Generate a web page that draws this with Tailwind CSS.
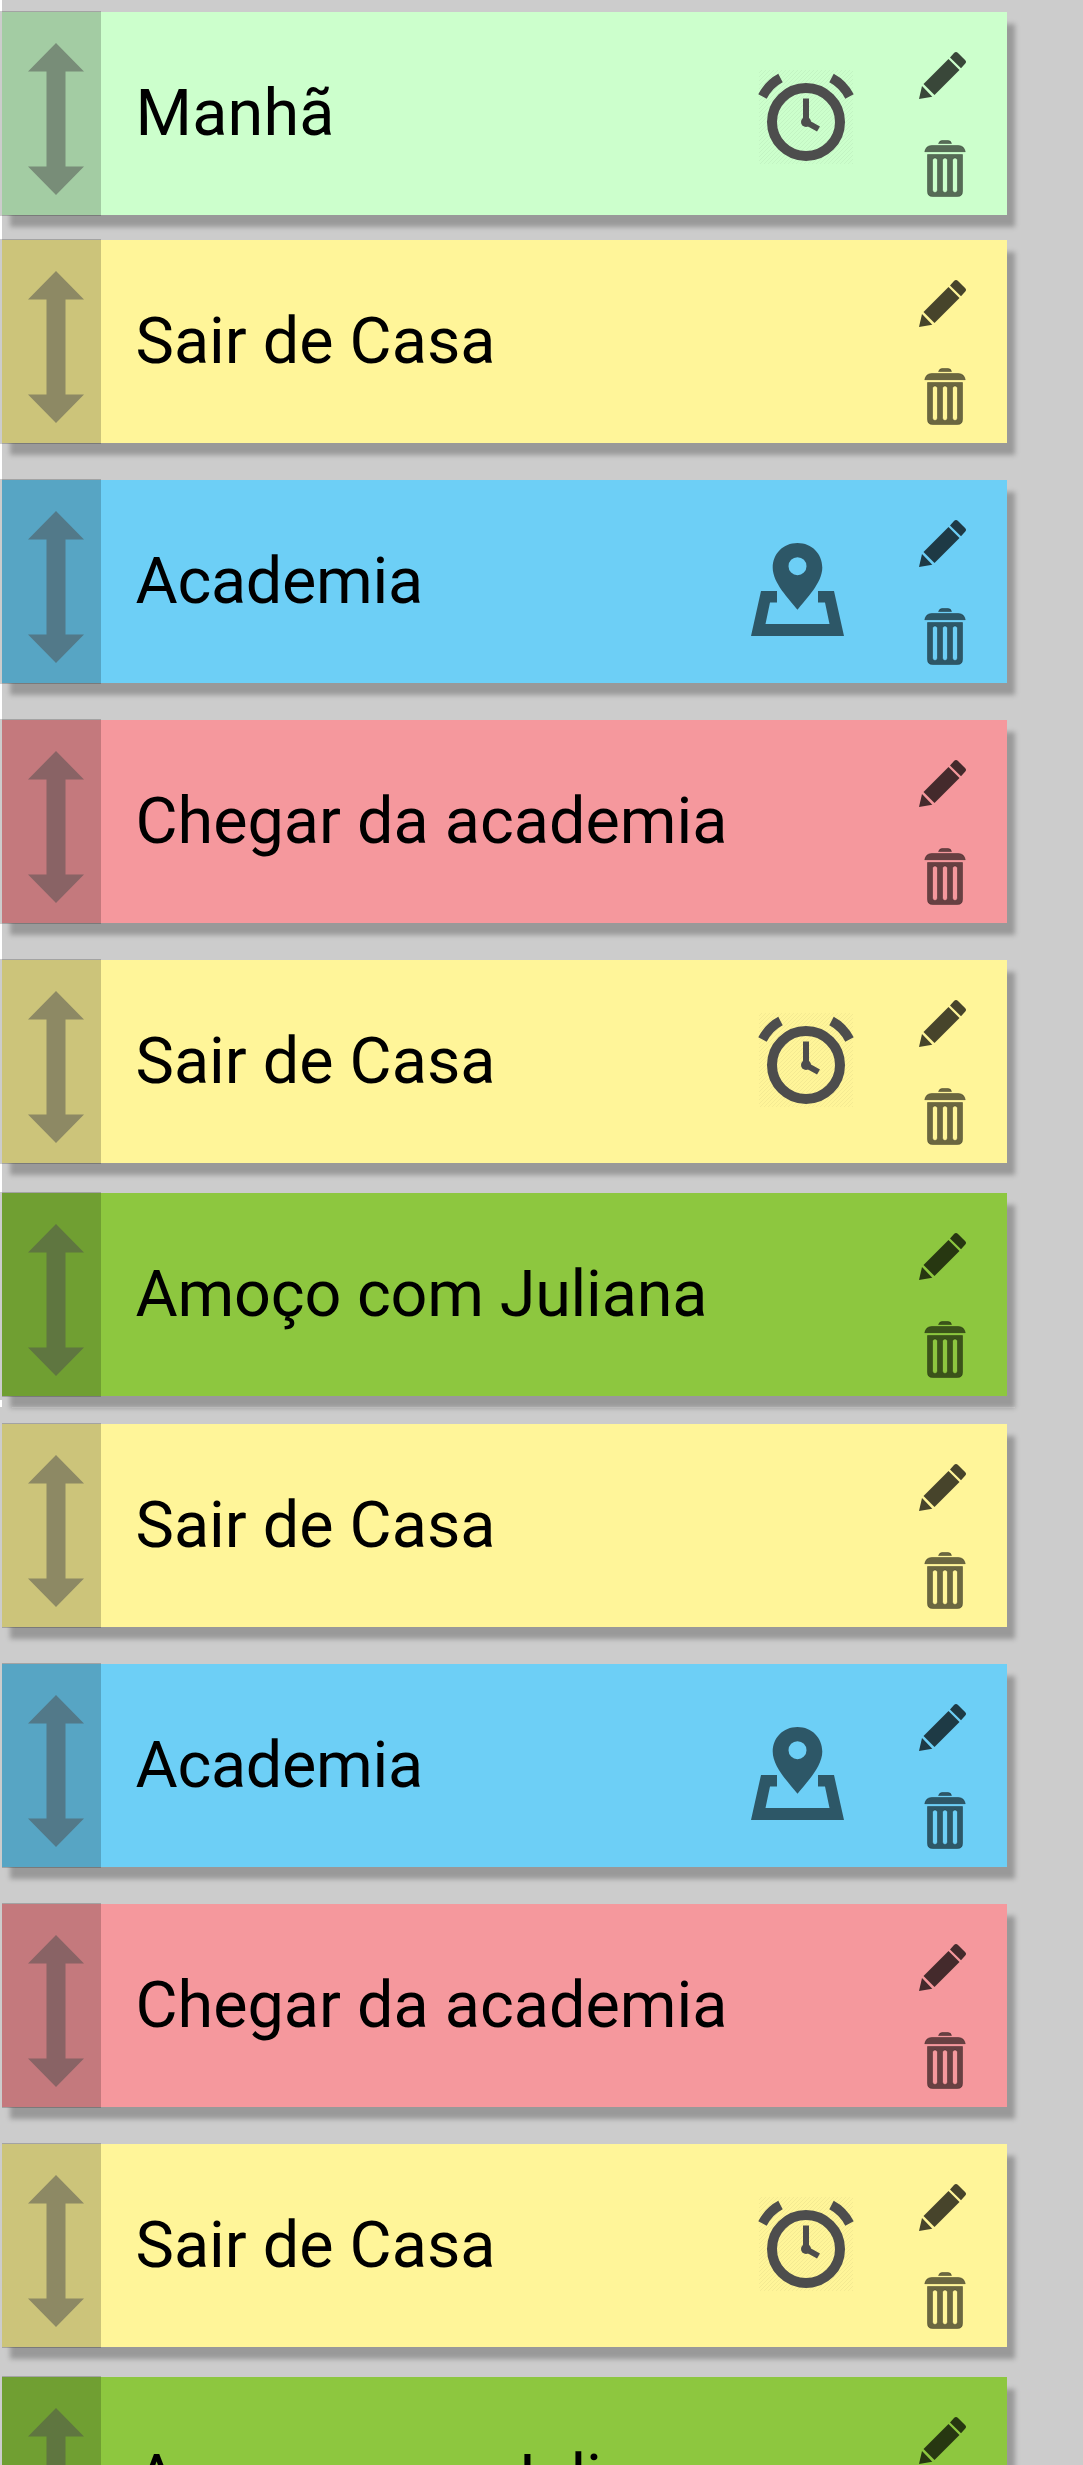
<!DOCTYPE html>
<html lang="pt-BR">
<head>
<meta charset="utf-8">
<title>Rotina</title>
<script src="https://cdn.jsdelivr.net/npm/@tailwindcss/browser@4"></script>
</head>
<body class="bg-[#ccc]">
<main id="list" class="relative flex h-[2465px] w-[1083px] flex-col overflow-hidden bg-[#ccc] pt-3 pl-0.5 font-['Roboto',sans-serif]">
<div class="absolute top-0 left-0 h-[1397px] w-0.5 bg-white"></div>
<div class="absolute top-[1400px] left-0 h-[7px] w-0.5 bg-white"></div>
<div class="absolute top-[1407px] left-[12px] z-10 h-px w-[1003px] bg-white/15"></div>
</main>
<template id="card">
<article class="relative flex h-[203px] w-[1005px] shrink-0 items-stretch shadow-[8px_12px_5px_0px_rgba(0,0,0,0.25)]">
<div data-handle class="-my-px flex shrink-0 justify-end bg-black/20 pr-[17px]">
<svg class="mt-8 h-[152px] w-14" viewBox="0 0 56 152" fill="#4d4d4d" fill-opacity=".5"><path d="M28 0 56 28.500H37.500V123.500H56L28 152 0 123.500H18.500V28.500H0Z"/></svg>
</div>
<h2 data-title class="ml-[34.500px] grow pt-[61px] text-[64.7px] leading-[80px] whitespace-nowrap text-black"></h2>
<div data-slot class="w-[118px] shrink-0"></div>
<div class="flex w-[95px] shrink-0 flex-col">
<svg class="mt-10 ml-[7px] h-[47px] w-[47px]" viewBox="0 0 47 47" fill="#000" fill-opacity=".72"><path d="M35 1Q37 -1 39 1L46.300 8.300Q47.800 10 46.300 11.500L42 16.300 31 5.600Z"/><path d="M29.500 7 40.500 18 15.500 43 4.500 32Z"/><path d="M3 34 13.300 44.700 0 47Z"/></svg>
<svg class="mt-[41px] ml-3 h-[57px] w-[42px]" viewBox="0 0 42 57" fill="#000" fill-opacity=".58" stroke="#000" stroke-opacity=".3"><path d="M14.500 3.500Q15.500.5 18 .5H24Q27 .5 27.500 3.500Z"/><path d="M.7 11.700Q2 5.500 7.500 5.500H34.500Q40 5.500 41.300 11.700Z"/><path fill-rule="evenodd" d="M3.500 14.500H38.500V51.500Q38.500 56.500 33.500 56.500H8.500Q3.500 56.500 3.500 51.500ZM8.500 20.500V49.500Q8.500 52.500 11 52.500T13.500 49.500V20.500Q13.500 18 11 18T8.500 20.500ZM18.500 20.500V49.500Q18.500 52.500 21 52.500T23.500 49.500V20.500Q23.500 18 21 18T18.500 20.500ZM28.500 20.500V49.500Q28.500 52.500 31 52.500T33.500 49.500V20.500Q33.500 18 31 18T28.500 20.500Z"/></svg>
</div>
</article>
</template>
<template id="alarm">
<svg class="ml-[-36px] h-[95px] w-24" viewBox="0 0 96 95"><defs><pattern id="hatch" width="4" height="4" patternUnits="userSpaceOnUse"><path d="M-1 1 1-1M0 4 4 0M3 5 5 3" stroke="#000" stroke-opacity=".045"/></pattern></defs><rect x="1" width="94" height="94" fill="url(#hatch)"/><g fill="none" stroke="#4d4d4d"><circle cx="48" cy="52" r="34" stroke-width="10"/><path stroke-width="9.500" d="M4.500 26.500Q11 14 22.500 8M73.500 8Q85 14 91.500 26.500"/><path stroke-width="6" d="M48 28.500V52L60.500 59"/></g><circle cx="48" cy="52" r="5" fill="#4d4d4d"/></svg>
</template>
<template id="place">
<svg class="ml-[-43px] h-[93px] w-[93px]" viewBox="0 0 93 93" fill="#000" fill-opacity=".58"><path fill-rule="evenodd" d="M46.500 0C32 0 21.700 11 21.700 24.500 21.700 40 38 56 46.500 66.700 55 56 71.300 40 71.300 24.500 71.300 11 61 0 46.500 0ZM46.500 14.200A9 9 0 1 1 46.500 32.200 9 9 0 1 1 46.500 14.200Z"/><path d="M10 48H26V59.500H19L14.500 81H78.500L74 59.500H67V48H83L93 93H0Z"/></svg>
</template>
<script>
// title, colour, icon, icon offset, gap below the card
const rows = [
  ['Manhã', '#ccffcc', 'alarm', 58, 25],
  ['Sair de Casa', '#fff599', '', 0, 37],
  ['Academia', '#6dcff6', 'place', 63, 37],
  ['Chegar da academia', '#f5989d', '', 0, 37],
  ['Sair de Casa', '#fff599', 'alarm', 53, 30],
  ['Amoço com Juliana', '#8dc73f', '', 0, 28],
  ['Sair de Casa', '#fff599', '', 0, 37],
  ['Academia', '#6dcff6', 'place', 63, 37],
  ['Chegar da academia', '#f5989d', '', 0, 37],
  ['Sair de Casa', '#fff599', 'alarm', 53, 30],
  ['Amoço com Juliana', '#8dc73f', '', 0, 0]
];
// letter spacing per title, in px
const tracking = { 'Manhã': 0.2, 'Academia': -0.3, 'Amoço com Juliana': -0.2 };
const list = document.getElementById('list');
const clone = id => document.getElementById(id).content.cloneNode(true);
rows.forEach(([title, color, icon, offset, gap], i) => {
  const node = clone('card');
  const card = node.querySelector('article');
  card.style.backgroundColor = color;
  card.style.marginBottom = gap + 'px';
  const handle = node.querySelector('[data-handle]');
  handle.style.width = (i < 6 ? 101 : 99) + 'px';
  handle.style.marginLeft = (i < 6 ? -2 : 0) + 'px';
  const heading = node.querySelector('[data-title]');
  heading.textContent = title;
  heading.style.letterSpacing = (tracking[title] || 0) + 'px';
  const slot = node.querySelector('[data-slot]');
  slot.style.paddingTop = offset + 'px';
  if (icon) slot.append(clone(icon));
  list.append(node);
});
</script>
</body>
</html>
